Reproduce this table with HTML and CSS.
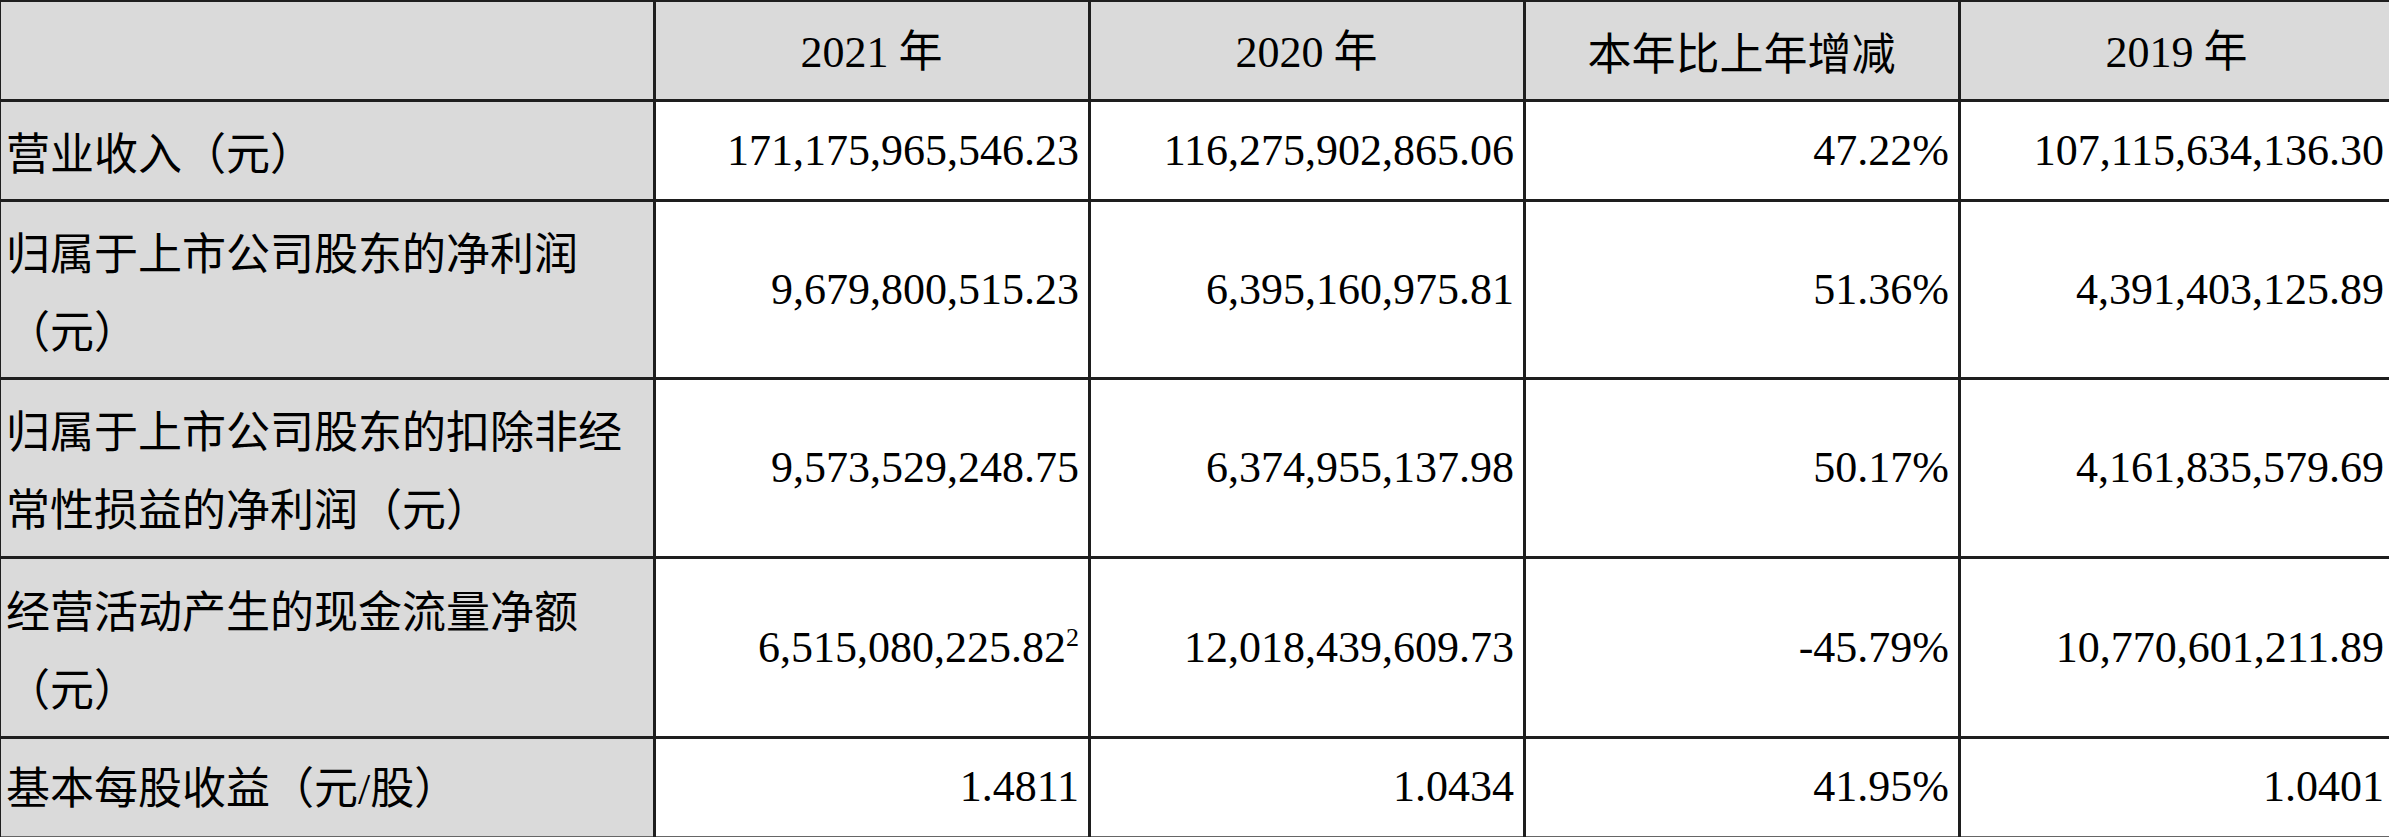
FILE: index.html
```html
<!DOCTYPE html>
<html lang="zh-CN">
<head>
<meta charset="utf-8">
<title>主要会计数据</title>
<link rel="stylesheet" href="styles.css">
</head>
<body>
<table class="fin">
  <colgroup>
    <col class="c-label">
    <col class="c-num">
    <col class="c-num">
    <col class="c-num">
    <col class="c-num">
  </colgroup>
  <thead>
    <tr class="h1">
      <th class="label"></th>
      <th><span class="lat">2021</span> 年</th>
      <th><span class="lat">2020</span> 年</th>
      <th>本年比上年增减</th>
      <th><span class="lat">2019</span> 年</th>
    </tr>
  </thead>
  <tbody>
    <tr class="h1">
      <td class="label">营业收入（元）</td>
      <td class="num">171,175,965,546.23</td>
      <td class="num">116,275,902,865.06</td>
      <td class="num">47.22%</td>
      <td class="num">107,115,634,136.30</td>
    </tr>
    <tr class="h2">
      <td class="label">归属于上市公司股东的净利润<br>（元）</td>
      <td class="num">9,679,800,515.23</td>
      <td class="num">6,395,160,975.81</td>
      <td class="num">51.36%</td>
      <td class="num">4,391,403,125.89</td>
    </tr>
    <tr class="h3">
      <td class="label">归属于上市公司股东的扣除非经<br>常性损益的净利润（元）</td>
      <td class="num">9,573,529,248.75</td>
      <td class="num">6,374,955,137.98</td>
      <td class="num">50.17%</td>
      <td class="num">4,161,835,579.69</td>
    </tr>
    <tr class="h4">
      <td class="label">经营活动产生的现金流量净额<br>（元）</td>
      <td class="num">6,515,080,225.82<sup class="note">2</sup></td>
      <td class="num">12,018,439,609.73</td>
      <td class="num">-45.79%</td>
      <td class="num">10,770,601,211.89</td>
    </tr>
    <tr class="h5">
      <td class="label">基本每股收益（元<span class="lat">/</span>股）</td>
      <td class="num">1.4811</td>
      <td class="num">1.0434</td>
      <td class="num">41.95%</td>
      <td class="num">1.0401</td>
    </tr>
  </tbody>
</table>
</body>
</html>
```

FILE: styles.css
```css
html, body {
  margin: 0;
  padding: 0;
  background: #ffffff;
  overflow: hidden;
}

body {
  width: 2389px;
  height: 837px;
}

.fin {
  border-collapse: collapse;
  table-layout: fixed;
  width: 2394px;
  margin-left: -2px;
  margin-top: -1px;
  font-family: "Noto Sans CJK SC", sans-serif;
  font-size: 44px;
  color: #000;
}

.c-label { width: 655px; }
.c-num { width: 435px; }

.fin th,
.fin td {
  border: 3px solid #1e1e1e;
  padding: 0 9px 0 8px;
  vertical-align: middle;
  line-height: 78px;
  white-space: nowrap;
}

.fin th {
  font-weight: normal;
  text-align: center;
  background: #dadada;
}

.fin td.label {
  background: #dadada;
  text-align: left;
  padding-left: 5px;
}

.fin td.num {
  background: #ffffff;
  text-align: right;
  font-family: "Liberation Serif", "Times New Roman", serif;
}

.lat {
  font-family: "Liberation Serif", "Times New Roman", serif;
}

.fin tr:last-child td {
  border-bottom: 2px solid #666;
}

.h1 { height: 100px; }
.h2 { height: 178px; }
.h3 { height: 179px; }
.h4 { height: 180px; }
.h5 { height: 99px; }

.note {
  font-size: 26px;
  line-height: 0;
  vertical-align: 16px;
}
```
